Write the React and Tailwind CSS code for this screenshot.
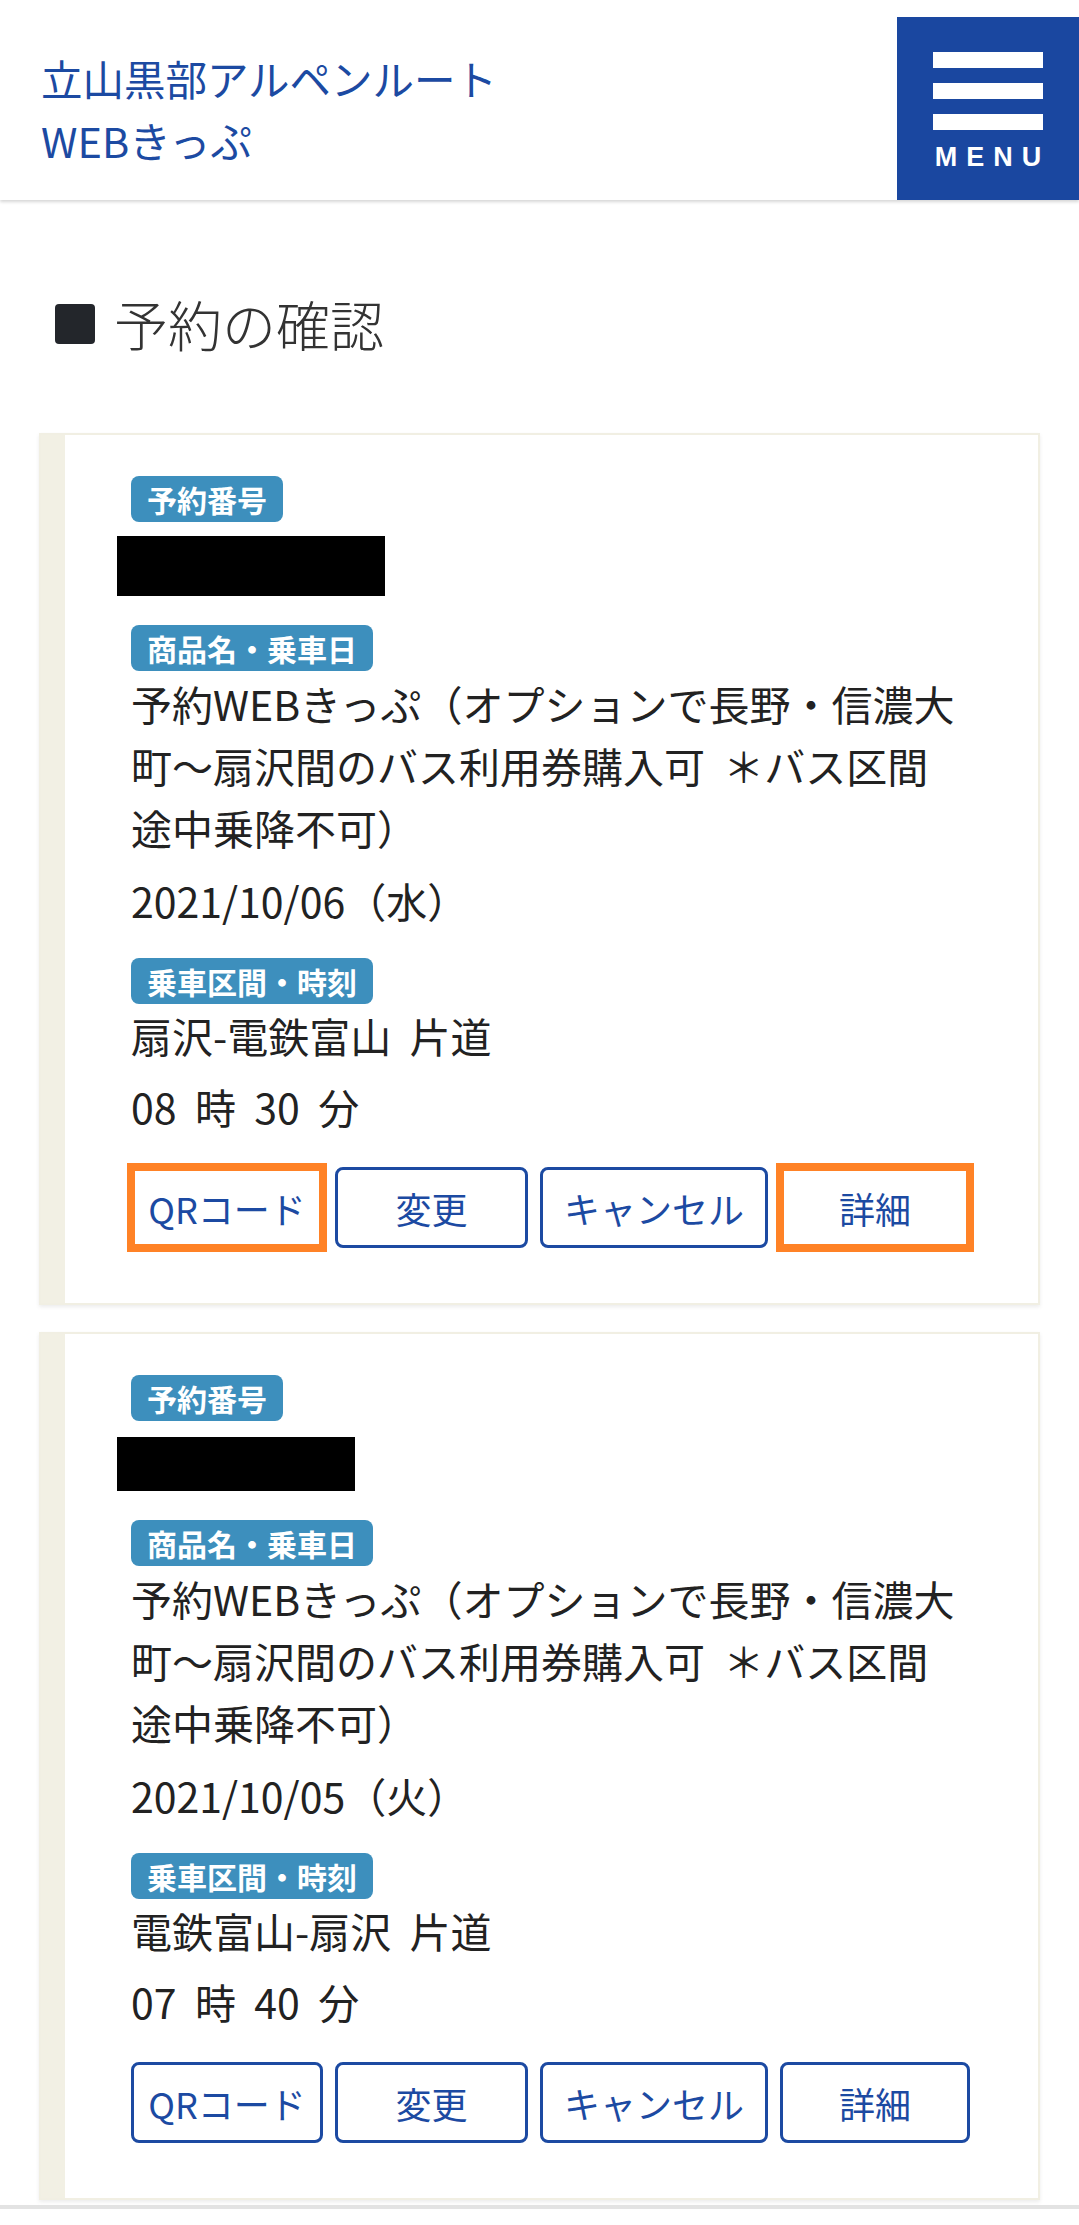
import React from 'react';

const productLines = ['予約WEBきっぷ（オプションで長野・信濃大', '町～扇沢間のバス利用券購入可\u00a0\u00a0＊バス区間', '途中乗降不可）'];

const reservations = [
    {
        id: 1,
        numberBox: 'w-[268px] h-[60px] mt-[14px]',
        product: productLines,
        date: '2021/10/06（水）',
        route: '扇沢-電鉄富山',
        hour: '08',
        minute: '30',
        highlight: true,
    },
    {
        id: 2,
        numberBox: 'w-[238px] h-[54px] mt-[16px]',
        product: productLines,
        date: '2021/10/05（火）',
        route: '電鉄富山-扇沢',
        hour: '07',
        minute: '40',
        highlight: false,
    },
];

function Badge({ children, className = '' }) {
    return (
        <div className={`inline-block bg-[#3d8fbd] text-white font-bold text-[30px] leading-[46px] px-[16px] rounded-[8px] ${className}`}>
            {children}
        </div>
    );
}

function ActionButton({ label, width, highlight }) {
    const base = 'h-[81px] flex items-center justify-center text-[36px] text-[#1c4aa2] bg-white';
    const frame = highlight
        ? 'border-4 border-[#ff8226] rounded-none ring-4 ring-[#ff8226]'
        : 'border-[3px] border-[#1c4aa2] rounded-[8px]';
    return (
        <button type="button" className={`${base} ${frame} ${width}`}>
            {label}
        </button>
    );
}

function ReservationCard({ item }) {
    return (
        <div className="flex bg-white border-2 border-[#f1efe3] shadow-[0_2px_4px_rgba(0,0,0,0.08)]">
            {/* left stripe */}
            <div className="w-[24px] shrink-0 bg-[#f2f0e4]" />
            <div className="flex-1 pl-[66px] pt-[41px] pb-[55px]">
                <Badge>予約番号</Badge>
                <div className={`bg-black -ml-[14px] ${item.numberBox}`} />

                <Badge className="mt-[29px]">商品名・乗車日</Badge>
                <p className="mt-[1px] text-[41px] leading-[62px] text-[#222]">
                    {item.product.map((line, i) => (
                        <span key={i} className="block">{line}</span>
                    ))}
                </p>
                <p className="mt-[11px] text-[41px] leading-[62px] text-[#222]">{item.date}</p>

                <Badge className="mt-[27px]">乗車区間・時刻</Badge>
                <p className="mt-0 text-[41px] leading-[62px] text-[#222]">
                    {item.route}{'\u00a0\u00a0'}片道
                </p>
                <p className="mt-[9px] text-[41px] leading-[62px] text-[#222]">
                    {item.hour}{'\u00a0\u00a0'}時{'\u00a0\u00a0'}{item.minute}{'\u00a0\u00a0'}分
                </p>

                <div className="mt-[30px] flex gap-[12px]">
                    <ActionButton label="QRコード" width="w-[192px]" highlight={item.highlight} />
                    <ActionButton label="変更" width="w-[193px]" />
                    <ActionButton label="キャンセル" width="w-[228px]" />
                    <ActionButton label="詳細" width="w-[190px]" highlight={item.highlight} />
                </div>
            </div>
        </div>
    );
}

export default function App() {
    return (
        <div className="min-h-[2225px] bg-white" style={{ fontFamily: '"Noto Sans CJK JP", "Noto Sans", sans-serif' }}>
            {/* Header */}
            <header className="h-[200px] flex justify-between items-start bg-white shadow-[0_2px_3px_rgba(0,0,0,0.16)] relative z-10">
                <div className="pl-[41px] pt-[47px] text-[41.5px] leading-[62px] text-[#1c4aa2]">
                    <div>立山黒部アルペンルート</div>
                    <div>WEBきっぷ</div>
                </div>
                <button type="button" className="mt-[17px] w-[182px] h-[183px] bg-[#1a47a0] flex flex-col items-center pt-[35px]">
                    <span className="block w-[110px] h-[16px] bg-white" />
                    <span className="block w-[110px] h-[16px] bg-white mt-[15px]" />
                    <span className="block w-[110px] h-[16px] bg-white mt-[15px]" />
                    <span
                        className="mt-[10px] pl-[9px] text-[27px] leading-[34px] font-bold tracking-[9px] text-white"
                        style={{ fontFamily: '"Liberation Sans", Arial, sans-serif' }}
                    >
                        MENU
                    </span>
                </button>
            </header>

            {/* Main */}
            <main className="px-[39px]">
                <h1 className="mt-[83px] flex items-center h-[81px] text-[54px] font-light text-[#333]">
                    <span className="ml-[16px] w-[40px] h-[40px] rounded-[4px] bg-[#23262b] mr-[19px]" />
                    予約の確認
                </h1>

                <div className="mt-[69px] flex flex-col gap-[27px]">
                    {reservations.map(item => (
                        <ReservationCard key={item.id} item={item} />
                    ))}
                </div>
            </main>

            <div className="mt-[5px] border-t-[4px] border-[#e3e3e3]" />
        </div>
    );
}
